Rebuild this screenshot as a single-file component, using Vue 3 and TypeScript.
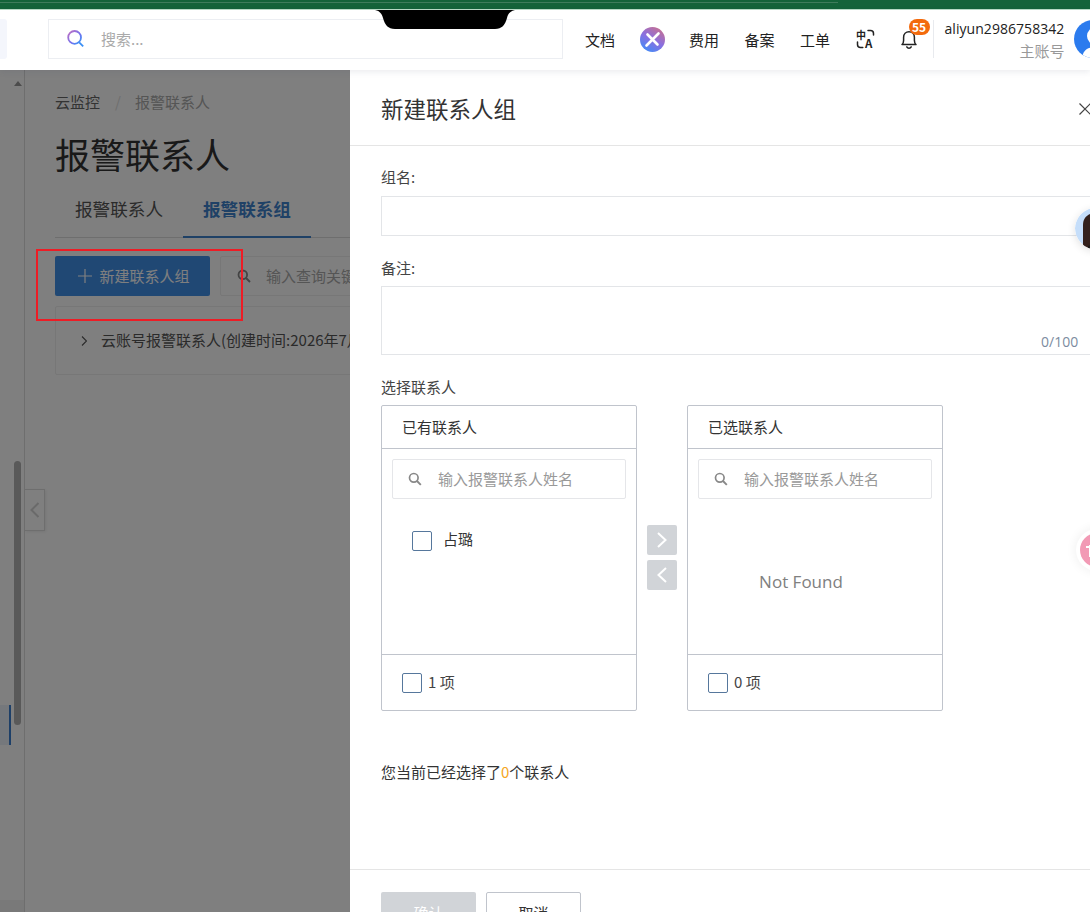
<script setup lang="ts">
import { ref } from "vue";

interface Panel {
  title: string;
  items: string[];
}

const navLinks = ["费用", "备案", "工单"];
const panels = ref<Panel[]>([
  { title: "已有联系人", items: ["占璐"] },
  { title: "已选联系人", items: [] },
]);
</script>

<template>
  <div class="page">
    <div class="browser-strip"><div class="strip-line"></div></div>
    <svg class="notch" width="140" height="20" viewBox="0 0 140 20">
      <path d="M0 0h140c-5 1-7 4-8 8-2 7-5 11-12 11H20C13 19 10 15 8 8 7 4 5 1 0 0z" fill="#000" />
    </svg>

    <header class="topbar">
      <div class="logo-stub"></div>
      <div class="global-search">
        <svg class="g-search-icon" width="20" height="20" viewBox="0 0 20 20" fill="none">
          <defs>
            <linearGradient id="sg" x1="0" y1="0" x2="1" y2="1">
              <stop offset="0" stop-color="#c26fc0" />
              <stop offset="0.6" stop-color="#6f72f0" />
              <stop offset="1" stop-color="#2f9bf5" />
            </linearGradient>
          </defs>
          <circle cx="8.6" cy="8.4" r="6.4" stroke="url(#sg)" stroke-width="1.8" />
          <path d="M13.2 13.4l4 4" stroke="#3a8ff5" stroke-width="1.8" />
        </svg>
        <span class="g-search-text">搜索...</span>
      </div>
      <nav class="top-nav">
        <span class="doc-link">文档</span>
        <span class="ai-ball">
          <svg width="25" height="25" viewBox="0 0 25 25">
            <defs>
              <linearGradient id="ball" x1="0.8" y1="0" x2="0.2" y2="1">
                <stop offset="0" stop-color="#c9708f" />
                <stop offset="0.5" stop-color="#8a6fe0" />
                <stop offset="1" stop-color="#3f8df8" />
              </linearGradient>
            </defs>
            <circle cx="12.5" cy="12.5" r="12.5" fill="url(#ball)" />
            <path d="M6.5 18.5L18.5 6.500M7.500 7.500l10 10" stroke="#fff" stroke-width="2.600" stroke-linecap="round" />
          </svg>
        </span>
        <span v-for="link in navLinks" :key="link" class="nav-link">{{ link }}</span>
        <svg class="lang-icon" width="20" height="20" viewBox="0 0 20 20" fill="none">
          <text x="0" y="10" font-size="10" font-weight="700" fill="#222">中</text>
          <text x="9" y="19" font-size="11.500" font-weight="700" fill="#222">A</text>
          <path d="M12 1.500h2.500a3 3 0 0 1 3 3V6M6.800 18.500H4.500a3 3 0 0 1-3-3V13" stroke="#222" stroke-width="1.500" stroke-linecap="round" />
        </svg>
        <span class="bell">
          <svg width="20" height="22" viewBox="0 0 20 22" fill="none">
            <path d="M3 16.500c1.200-1 1.600-2 1.600-4V9.200C4.600 6 7 3.700 10 3.700s5.400 2.300 5.400 5.500v3.300c0 2 .4 3 1.600 4z" stroke="#222" stroke-width="1.500" stroke-linejoin="round" />
            <path d="M7.800 18.800c.5 1 1.300 1.400 2.200 1.400s1.700-.4 2.200-1.400" stroke="#222" stroke-width="1.500" stroke-linecap="round" />
          </svg>
          <em class="badge">55</em>
        </span>
        <div class="account">
          <div class="account-name">aliyun2986758342</div>
          <div class="account-role">主账号</div>
        </div>
        <svg class="avatar" width="38" height="38" viewBox="0 0 38 38">
          <defs>
            <clipPath id="avatar-clip"><circle cx="19" cy="19" r="19" /></clipPath>
          </defs>
          <circle cx="19" cy="19" r="19" fill="#2b7bee" />
          <g clip-path="url(#avatar-clip)">
            <circle cx="22" cy="16" r="9" fill="#fff" />
            <path d="M8 38c1-8 6-11 14-11s12 3 14 11z" fill="#fff" />
          </g>
        </svg>
      </nav>
    </header>

    <div class="body">
      <div class="console">
        <aside class="side-rail">
          <div class="rail-arrow"></div>
          <div class="rail-active"></div>
          <div class="rail-thumb"></div>
          <div class="rail-foot"></div>
        </aside>
        <div class="collapse-handle">
          <svg width="10" height="16" viewBox="0 0 10 16" fill="none">
            <path d="M8.500 1L1.500 8l7 7" stroke="#d4d4d4" stroke-width="2" />
          </svg>
        </div>
        <main class="console-main">
          <div class="crumbs">
            <span class="crumb-root">云监控</span>
            <span class="crumb-sep">/</span>
            <span class="crumb-leaf">报警联系人</span>
          </div>
          <h1 class="page-title">报警联系人</h1>
          <div class="tabs">
            <span class="tab">报警联系人</span>
            <span class="tab tab-active">报警联系组</span>
          </div>
          <div class="toolbar">
            <button class="primary-btn">
              <svg width="14" height="14" viewBox="0 0 14 14" fill="none">
                <path d="M7 0v14M0 7h14" stroke="#fff" stroke-width="1.200" />
              </svg>
              <span class="nudge">新建联系人组</span>
            </button>
            <div class="query-box">
              <svg width="14" height="14" viewBox="0 0 14 14" fill="none">
                <circle cx="5.800" cy="5.800" r="4.300" stroke="#888" stroke-width="1.800" />
                <path d="M9 9l4 4" stroke="#888" stroke-width="2" />
              </svg>
              <span class="nudge">输入查询关键字</span>
            </div>
          </div>
          <div class="group-card">
            <svg width="6" height="10" viewBox="0 0 6 10" fill="none">
              <path d="M1 .5L5.500 5 1 9.500" stroke="#555" stroke-width="1.100" />
            </svg>
            <span class="nudge">云账号报警联系人(创建时间:2026年7月15日)</span>
          </div>
        </main>
        <div class="mask"></div>
        <div class="red-mark"></div>
      </div>

      <section class="drawer">
        <div class="drawer-head">
          <h2>新建联系人组</h2>
          <svg class="drawer-close" width="12" height="12" viewBox="0 0 12 12" fill="none">
            <path d="M.5.500l11 11M11.500.500l-11 11" stroke="#444" stroke-width="1.200" />
          </svg>
        </div>
        <div class="drawer-body">
          <label class="field-label">组名:</label>
          <div class="text-input"></div>
          <label class="field-label note-label">备注:</label>
          <div class="text-area"><span class="counter">0/100</span></div>
          <label class="field-label pick-label">选择联系人</label>

          <div class="transfer">
            <template v-for="(panel, i) in panels" :key="panel.title">
              <div class="panel">
                <div class="panel-head">{{ panel.title }}</div>
                <div class="panel-body">
                  <div class="panel-search">
                    <svg width="14" height="14" viewBox="0 0 14 14" fill="none">
                      <circle cx="5.800" cy="5.800" r="4.300" stroke="#888" stroke-width="1.700" />
                      <path d="M9 9l3.800 3.800" stroke="#888" stroke-width="1.900" />
                    </svg>
                    <span class="nudge">输入报警联系人姓名</span>
                  </div>
                  <div v-for="item in panel.items" :key="item" class="panel-item">
                    <span class="check"></span>
                    <span class="item-name">{{ item }}</span>
                  </div>
                  <div v-if="!panel.items.length" class="not-found">Not Found</div>
                </div>
                <div class="panel-foot">
                  <span class="check"></span>
                  <span class="nudge">{{ panel.items.length }} 项</span>
                </div>
              </div>
              <div v-if="i === 0" class="move-btns">
                <button class="move-btn">
                  <svg width="12" height="18" viewBox="0 0 12 18" fill="none">
                    <path d="M2 2l7.500 7L2 16" stroke="#fff" stroke-width="2" />
                  </svg>
                </button>
                <button class="move-btn">
                  <svg width="12" height="18" viewBox="0 0 12 18" fill="none">
                    <path d="M10 2L2.500 9l7.500 7" stroke="#fff" stroke-width="2" />
                  </svg>
                </button>
              </div>
            </template>
          </div>

          <p class="summary">您当前已经选择了<b>0</b>个联系人</p>
        </div>
        <div class="drawer-foot">
          <button class="btn-ok">确认</button>
          <button class="btn-cancel">取消</button>
        </div>
      </section>

      <div class="float-girl">
        <svg width="41" height="41" viewBox="0 0 41 41">
          <circle cx="20.500" cy="20.500" r="20.500" fill="#c5defa" />
          <path d="M8 34V17C8 9 14 5 21 5s20 3 20 11v25H8z" fill="#33201c" />
          <path d="M15 16h26v20H15z" fill="#7b5148" />
          <path d="M13 38c3-2 6-2 11-2s12 0 17 2v3H13z" fill="#1d1a1a" />
        </svg>
      </div>
      <div class="float-pink">
        <svg width="34" height="34" viewBox="0 0 34 34" fill="none">
          <path d="M6 14h8M10 12v12" stroke="#fff" stroke-width="2" />
        </svg>
      </div>
    </div>
  </div>
</template>

<style>
html,
body {
  margin: 0;
  overflow: hidden;
}
</style>

<style scoped>
.page {
  position: relative;
  width: 1090px;
  height: 912px;
  overflow: hidden;
  display: flex;
  flex-direction: column;
  background: #fff;
  font-family: "Noto Sans CJK SC", "Open Sans", sans-serif;
  font-size: 15px;
  color: #333;
}
.browser-strip {
  height: 9px;
  flex: none;
  background: #14633a;
  border-bottom: 1px solid #b9dcc6;
}
.strip-line {
  width: 838px;
  height: 1px;
  margin-top: 2px;
  background: #3f7c5c;
}
.notch {
  position: absolute;
  top: 10px;
  left: 375px;
  z-index: 5;
}
.topbar {
  position: relative;
  z-index: 3;
  flex: none;
  height: 60px;
  padding-bottom: 2px;
  box-sizing: border-box;
  display: flex;
  align-items: center;
  background: #fff;
  box-shadow: 0 2px 6px rgba(60, 70, 100, 0.1);
}
.logo-stub {
  flex: none;
  width: 7px;
  height: 40px;
  background: #f4f6fc;
  border-radius: 0 3px 3px 0;
  margin-right: 41px;
}
.global-search {
  flex: none;
  width: 515px;
  height: 40px;
  box-sizing: border-box;
  border: 1px solid #eceef2;
  display: flex;
  align-items: center;
  color: #aaa;
}
.g-search-icon {
  margin-left: 17px;
  margin-right: 15px;
}
.g-search-text {
  margin-top: -1px;
}
.top-nav {
  display: flex;
  align-items: center;
  margin-left: 22px;
  color: #222;
  flex: none;
}
.doc-link {
  width: 55px;
}
.ai-ball {
  display: block;
  height: 25px;
  width: 49px;
}
.nav-link {
  width: 55.500px;
}
.lang-icon {
  font-family: "Noto Sans CJK SC", sans-serif;
}
.bell {
  position: relative;
  display: block;
  margin-left: 23px;
  height: 22px;
}
.badge {
  position: absolute;
  left: 10px;
  top: -9px;
  width: 21px;
  height: 16px;
  border-radius: 8px;
  background: #f36a0c;
  color: #fff;
  font-style: normal;
  font-size: 12px;
  font-weight: 600;
  line-height: 16px;
  text-align: center;
}
.account {
  margin-left: 14px;
  border-left: 1px solid #e8eaee;
  padding-left: 11px;
  height: 38px;
  text-align: right;
}
.account-name {
  line-height: 18px;
  font-family: "Open Sans", sans-serif;
  font-size: 14px;
  letter-spacing: 0.05px;
}
.account-role {
  color: #999;
  line-height: 25px;
}
.avatar {
  margin-left: 10px;
  flex: none;
}
.body {
  position: relative;
  flex: 1;
  display: flex;
  min-height: 0;
}
.console {
  position: relative;
  width: 350px;
  flex: none;
  display: flex;
  overflow: hidden;
  background: #fff;
}
.side-rail {
  position: relative;
  width: 25px;
  flex: none;
  box-sizing: border-box;
  border-right: 1px solid #ddd;
  background: #fff;
}
.rail-arrow {
  position: absolute;
  left: 14px;
  top: 11px;
  border: 4px solid transparent;
  border-top: 0;
  border-bottom: 5px solid #999;
}
.rail-active {
  position: absolute;
  left: 0;
  top: 635px;
  width: 9px;
  height: 40px;
  background: #eaf0f8;
  border-right: 2px solid #3b7fd0;
}
.rail-thumb {
  position: absolute;
  left: 14px;
  top: 391px;
  width: 7px;
  height: 264px;
  border-radius: 4px;
  background: #b2b2b2;
}
.rail-foot {
  position: absolute;
  left: 0;
  right: 0;
  bottom: 0;
  height: 12px;
  background: #f2f2f2;
}
.collapse-handle {
  position: absolute;
  left: 25px;
  top: 419px;
  width: 20px;
  height: 42px;
  box-sizing: border-box;
  background: #fff;
  border: 1px solid #ddd;
  border-left: 0;
  box-shadow: 1px 1px 3px rgba(0, 0, 0, 0.08);
  display: flex;
  align-items: center;
  justify-content: center;
}
.console-main {
  flex: none;
  width: 1000px;
  padding: 22px 0 0 30px;
  box-sizing: border-box;
}
.crumbs {
  display: flex;
  line-height: 20px;
  color: #aaa;
}
.crumb-root {
  color: #666;
}
.crumb-sep {
  margin: 0 14px 0 15px;
  color: #ddd;
}
.page-title {
  margin: 20px 0 0;
  font-size: 35px;
  font-weight: 400;
  line-height: 44px;
  color: #333;
}
.tabs {
  margin-top: 10px;
  height: 52px;
  display: flex;
  border-bottom: 1px solid #ddd;
  box-sizing: border-box;
  white-space: nowrap;
}
.tab {
  padding: 0 20px;
  font-size: 17.600px;
  line-height: 46px;
  color: #555;
}
.tab-active {
  font-weight: 700;
  color: #3f82cc;
  height: 50px;
  border-bottom: 2px solid #3f82cc;
}
.toolbar {
  margin-top: 18px;
  display: flex;
  gap: 10px;
}
.primary-btn {
  width: 155px;
  height: 40px;
  border: 0;
  border-radius: 2px;
  background: #4190e8;
  color: #fff;
  font: inherit;
  display: flex;
  align-items: center;
  justify-content: center;
  gap: 7px;
  padding: 0 0 0 3px;
}
.query-box {
  flex: none;
  width: 400px;
  height: 38px;
  border: 1px solid #eee;
  border-radius: 2px;
  display: flex;
  align-items: center;
  padding-left: 16px;
  gap: 15px;
  color: #aaa;
}
.group-card {
  margin-top: 10px;
  width: 900px;
  height: 67px;
  border: 1px solid #eee;
  border-radius: 2px;
  display: flex;
  align-items: center;
  gap: 14px;
  padding-left: 25px;
  color: #555;
}
.mask {
  position: absolute;
  inset: 0;
  background: rgba(0, 0, 0, 0.5);
}
.red-mark {
  position: absolute;
  left: 36px;
  top: 179px;
  width: 203px;
  height: 68px;
  border: 2px solid #ee1c25;
}
.drawer {
  flex: none;
  width: 800px;
  display: flex;
  flex-direction: column;
  background: #fff;
}
.drawer-head {
  flex: none;
  height: 76px;
  box-sizing: border-box;
  border-bottom: 1px solid #e5e5e5;
  padding: 0 0 0 31px;
  display: flex;
  align-items: center;
}
.drawer-head h2 {
  margin: 0;
  font-size: 22.500px;
  font-weight: 400;
  color: #333;
}
.drawer-close {
  position: absolute;
  left: 1079px;
  top: 33px;
}
.drawer-body {
  flex: 1;
  min-height: 0;
  padding: 0 0 0 31px;
}
.field-label {
  display: block;
  line-height: 20px;
  color: #444;
  margin-top: 21px;
}
.text-input {
  width: 760px;
  height: 38px;
  margin-top: 9px;
  border: 1px solid #e3e5e8;
}
.note-label {
  margin-top: 22px;
}
.text-area {
  position: relative;
  width: 760px;
  height: 67px;
  margin-top: 8px;
  border: 1px solid #e3e5e8;
}
.counter {
  position: absolute;
  left: 659px;
  top: 45px;
  color: #7c8ba0;
  font-family: "Open Sans", sans-serif;
  font-size: 14px;
}
.pick-label {
  margin-top: 22px;
}
.transfer {
  display: flex;
  margin-top: 8px;
}
.panel {
  width: 256px;
  height: 306px;
  box-sizing: border-box;
  border: 1px solid #c0c4cc;
  border-radius: 2px;
  display: flex;
  flex-direction: column;
}
.panel-head {
  flex: none;
  height: 43px;
  box-sizing: border-box;
  border-bottom: 1px solid #c0c4cc;
  padding-left: 20px;
  line-height: 41px;
  color: #333;
}
.panel-body {
  flex: 1;
  min-height: 0;
  padding: 10px;
  display: flex;
  flex-direction: column;
}
.panel-search {
  height: 38px;
  border: 1px solid #e5e6e9;
  border-radius: 2px;
  display: flex;
  align-items: center;
  padding-left: 15px;
  gap: 16px;
  color: #999;
  flex: none;
}
.nudge {
  margin-top: -2px;
}
.panel-item {
  display: flex;
  align-items: center;
  gap: 11px;
  padding-left: 20px;
  margin-top: 32px;
  color: #333;
}
.item-name {
  margin-top: -6px;
}
.not-found {
  flex: 1;
  display: flex;
  align-items: center;
  justify-content: center;
  font-family: "Open Sans", sans-serif;
  font-size: 17px;
  color: #808080;
  padding: 20px 28px 0 0;
}
.panel-foot {
  flex: none;
  height: 56px;
  box-sizing: border-box;
  border-top: 1px solid #c0c4cc;
  padding-left: 20px;
  display: flex;
  align-items: center;
  gap: 6px;
  color: #444;
}
.check {
  display: block;
  width: 20px;
  height: 20px;
  box-sizing: border-box;
  border: 1px solid #56779c;
  border-radius: 2px;
  flex: none;
}
.move-btns {
  width: 50px;
  flex: none;
  display: flex;
  flex-direction: column;
  align-items: center;
  gap: 5px;
  padding-top: 120px;
}
.move-btn {
  width: 30px;
  height: 30px;
  padding: 0;
  border: 0;
  border-radius: 2px;
  background: #d1d4d8;
  display: flex;
  align-items: center;
  justify-content: center;
}
.summary {
  margin: 51px 0 0;
  line-height: 20px;
  color: #333;
}
.summary b {
  font-weight: 400;
  color: #f5a623;
}
.drawer-foot {
  flex: none;
  height: 43px;
  box-sizing: border-box;
  border-top: 1px solid #e5e5e5;
  padding: 22px 0 0 31px;
  display: flex;
  gap: 10px;
  overflow: hidden;
}
.drawer-foot button {
  flex: none;
  width: 95px;
  height: 40px;
  border-radius: 2px;
  font: inherit;
  padding: 0;
}
.btn-ok {
  border: 0;
  background: #d1d4d8;
  color: #fff;
}
.btn-cancel {
  border: 1px solid #c0c4cc;
  background: #fff;
  color: #333;
}
.float-girl {
  position: absolute;
  left: 1075px;
  top: 138px;
  z-index: 2;
  width: 41px;
  height: 41px;
  border-radius: 50%;
  overflow: hidden;
  box-shadow: 0 2px 8px rgba(0, 0, 0, 0.12);
}
.float-girl svg {
  display: block;
}
.float-pink {
  position: absolute;
  left: 1080px;
  top: 463px;
  width: 34px;
  height: 34px;
  border-radius: 50%;
  background: #f29ab5;
  box-shadow: 0 0 0 4px #fff, 0 0 10px 6px rgba(0, 0, 0, 0.05);
}
.float-pink svg {
  display: block;
}
</style>
